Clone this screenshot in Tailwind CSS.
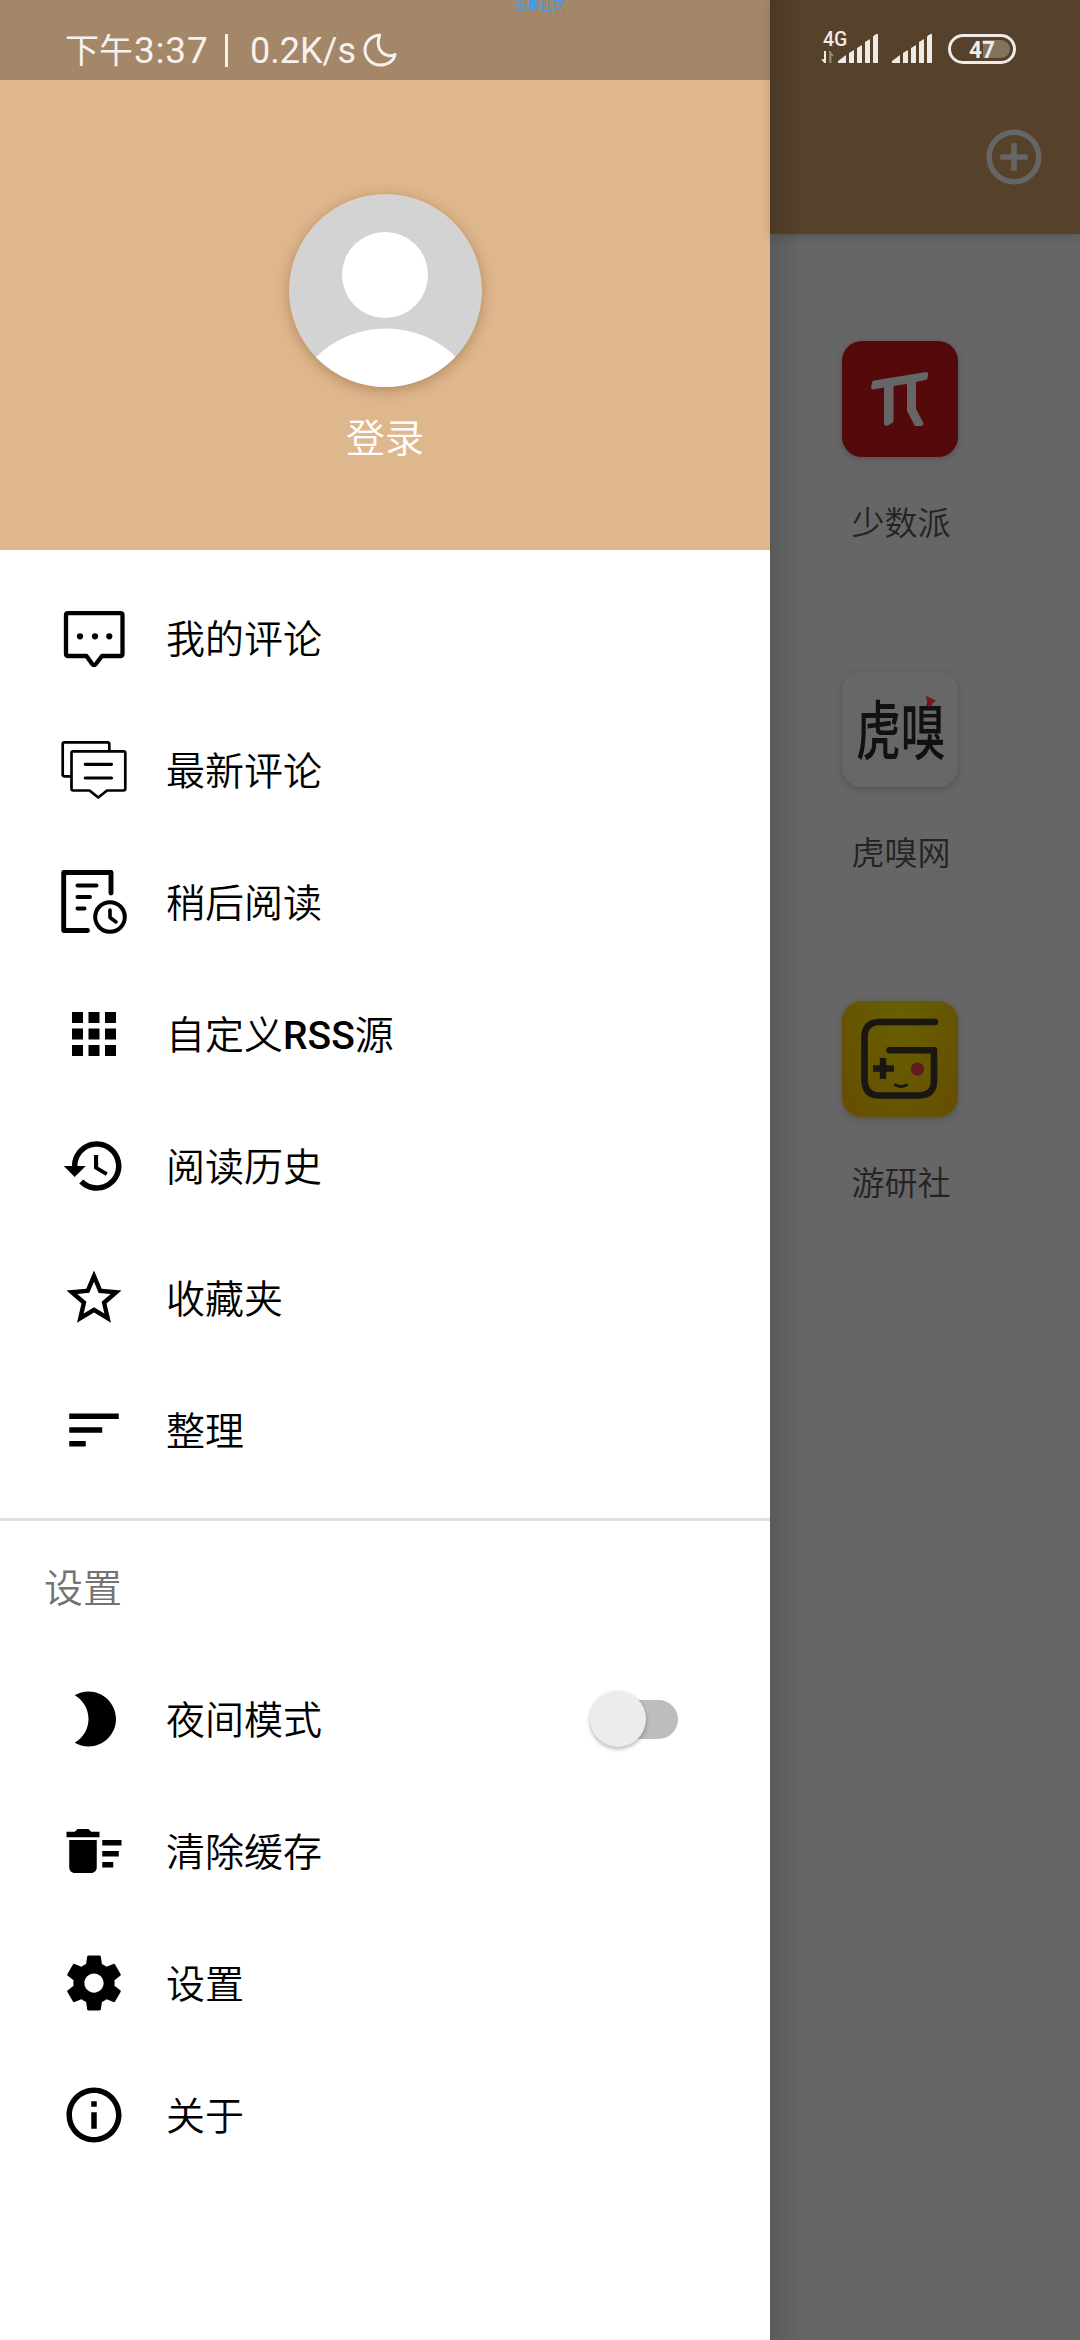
<!DOCTYPE html>
<html lang="zh-CN">
<head>
<meta charset="utf-8">
<title>RSS</title>
<script src="https://cdn.jsdelivr.net/npm/@tailwindcss/browser@4"></script>
</head>
<body class="relative flex h-[2340px] w-[1080px] overflow-hidden bg-[#666666] font-[Roboto,'Noto_Sans_CJK_SC',sans-serif] text-black">

<!-- Drawer -->
<aside class="flex h-full w-[770px] shrink-0 flex-col bg-white">
  <header class="flex h-[550px] flex-col items-center bg-[#dfb78d]">
    <div class="flex h-[80px] w-full items-center bg-[#a48769] pt-[21px] pl-[65px] text-[37px] leading-[36px] text-[#f6f1ed]">
      <span class="w-[69px] text-[34px] whitespace-nowrap">下午</span>
      <span class="w-[91px] whitespace-nowrap tracking-[0.8px]">3:37</span>
      <span class="mr-[20px] h-[33px] w-[3px] bg-[#f6f1ed]"></span>
      <span class="w-[115px] pl-[2px] text-[36px] whitespace-nowrap">0.2K/s</span>
      <svg class="mb-[20px] size-[34px] translate-y-[9px]" viewBox="0 0 34 34" fill="none" stroke="#f6f1ed" stroke-width="3" stroke-linejoin="round"><path d="M16.500 2C8 3 2 9 2 17C2 25.500 9 32 17 32C24.500 32 31 28 32 21.500C25 25.500 11 20 16.500 2Z"/></svg>
    </div>
    <svg class="mt-[114px] size-[193px] rounded-full shadow-[0_3px_14px_rgba(80,40,0,0.32)]" viewBox="0 0 193 193">
      <defs><clipPath id="av"><circle cx="96.500" cy="96.500" r="96.500"/></clipPath></defs>
      <g clip-path="url(#av)"><rect width="193" height="193" fill="#d3d3d3"/><circle cx="96" cy="81" r="43" fill="#fff"/><circle cx="97" cy="234.500" r="100" fill="#fff"/></g>
    </svg>
    <div class="mt-[26px] h-[52px] text-[39px] leading-[52px] font-[350] text-white">登录</div>
  </header>

  <nav class="flex flex-col pt-[22px] text-[39px] leading-[66px] font-[350]">
    <a class="flex h-[132px] items-center gap-[39px] pl-[61px]">
      <svg class="size-[66px]" viewBox="0 0 66 66" fill="none" stroke="#000" stroke-width="4.300" stroke-linejoin="round"><path d="M7 8.200H59.500Q61.500 8.200 61.500 10.200V49Q61.500 51 59.500 51H41L35 58.800Q33 61.200 31 58.800L25.500 51H7Q5 51 5 49V10.200Q5 8.200 7 8.200Z"/><g fill="#000" stroke="none"><circle cx="19" cy="31.300" r="3.100"/><circle cx="34" cy="31.300" r="3.100"/><circle cx="48.300" cy="31.300" r="3.100"/></g></svg>
      <span class="pt-[3px]">我的评论</span>
    </a>
    <a class="flex h-[132px] items-center gap-[39px] pl-[61px]">
      <svg class="size-[66px]" viewBox="0 0 66 66" fill="none" stroke="#000" stroke-width="2.700" stroke-linejoin="round"><path d="M10 39.300H3.500Q1.700 39.300 1.700 37.500V7Q1.700 5.300 3.500 5.300H46.500Q48.300 5.300 48.300 7V14"/><path d="M12.300 14.300H62.500Q64.300 14.300 64.300 16V51.800Q64.300 53.500 62.500 53.500H46L37.300 60.500L28.500 53.500H12.300Q10.500 53.500 10.500 51.800V16Q10.500 14.300 12.300 14.300Z"/><path stroke-linecap="round" stroke-width="3.200" d="M24.300 27.300H50.500M24.300 41H50.500"/></svg>
      <span class="pt-[3px]">最新评论</span>
    </a>
    <a class="flex h-[132px] items-center gap-[39px] pl-[61px]">
      <svg class="size-[66px]" viewBox="0 0 66 66" fill="none" stroke="#000" stroke-width="4.900" stroke-linejoin="round" stroke-linecap="round"><path d="M50 24V3.500H2.700V61.500H26.500"/><path stroke-width="4" d="M16.500 16.500H35.500M16.500 28H29M16.500 39.500H23.500"/><circle cx="49" cy="48" r="14.800" stroke-width="4"/><path stroke-width="3.600" d="M49 41V48.500L55 53"/></svg>
      <span class="pt-[3px]">稍后阅读</span>
    </a>
    <a class="flex h-[132px] items-center gap-[39px] pl-[61px]">
      <svg class="size-[66px]" viewBox="0 0 24 24"><path d="M4 8h4V4H4v4zm6 12h4v-4h-4v4zm-6 0h4v-4H4v4zm0-6h4v-4H4v4zm6 0h4v-4h-4v4zm6-10v4h4V4h-4zm-6 4h4V4h-4v4zm6 6h4v-4h-4v4zm0 6h4v-4h-4v4z"/></svg>
      <span class="pt-[3px]">自定义<b class="font-medium">RSS</b>源</span>
    </a>
    <a class="flex h-[132px] items-center gap-[39px] pl-[61px]">
      <svg class="size-[66px]" viewBox="0 0 24 24"><path d="M13 3c-4.970 0-9 4.030-9 9H1l3.890 3.890.070.140L9 12H6c0-3.870 3.130-7 7-7s7 3.130 7 7-3.130 7-7 7c-1.930 0-3.680-.790-4.940-2.060l-1.420 1.420C8.270 19.990 10.510 21 13 21c4.970 0 9-4.030 9-9s-4.030-9-9-9zm-1 5v5l4.280 2.540.720-1.210-3.500-2.080V8H12z"/></svg>
      <span class="pt-[3px]">阅读历史</span>
    </a>
    <a class="flex h-[132px] items-center gap-[39px] pl-[61px]">
      <svg class="size-[66px]" viewBox="0 0 24 24"><path d="M22 9.240l-7.190-.620L12 2 9.190 8.630 2 9.240l5.460 4.730L5.820 21 12 17.270 18.180 21l-1.630-7.030L22 9.240zM12 15.400l-3.760 2.270 1-4.280-3.320-2.880 4.380-.380L12 6.100l1.710 4.040 4.380.380-3.320 2.880 1 4.280L12 15.400z"/></svg>
      <span class="pt-[3px]">收藏夹</span>
    </a>
    <a class="flex h-[132px] items-center gap-[39px] pl-[61px]">
      <svg class="size-[66px]" viewBox="0 0 24 24"><path d="M3 18h6v-2H3v2zM3 6v2h18V6H3zm0 7h12v-2H3v2z"/></svg>
      <span class="pt-[3px]">整理</span>
    </a>

    <div class="mt-[22px] h-[3px] bg-[#e0e0e0]"></div>
    <h2 class="flex h-[132px] items-center pt-[3px] pl-[44px] text-[#737373]">设置</h2>

    <a class="flex h-[132px] items-center gap-[39px] pl-[61px]">
      <svg class="size-[66px]" viewBox="0 0 24 24"><path d="M10 2c-1.820 0-3.530.500-5 1.350C7.990 5.080 10 8.300 10 12s-2.010 6.920-5 8.650C6.470 21.500 8.180 22 10 22c5.520 0 10-4.480 10-10S15.520 2 10 2z"/></svg>
      <span class="pt-[3px]">夜间模式</span>
      <span class="mr-[92px] ml-auto flex h-[39px] w-[82px] items-center rounded-full bg-[#bdbdbd]"><i class="-ml-[6px] size-[56px] shrink-0 rounded-full bg-[#ececec] shadow-[0_2px_4px_rgba(0,0,0,0.3)]"></i></span>
    </a>
    <a class="flex h-[132px] items-center gap-[39px] pl-[61px]">
      <svg class="size-[66px]" viewBox="0 0 24 24"><path d="M15 16h4v2h-4zm0-8h7v2h-7zm0 4h6v2h-6zM3 18c0 1.100.900 2 2 2h6c1.100 0 2-.900 2-2V8H3v10zM14 5h-3l-1-1H6L5 5H2v2h12z"/></svg>
      <span class="pt-[3px]">清除缓存</span>
    </a>
    <a class="flex h-[132px] items-center gap-[39px] pl-[61px]">
      <svg class="size-[66px]" viewBox="0 0 24 24"><path d="M19.430 12.980c.040-.320.070-.640.070-.980s-.030-.660-.070-.980l2.110-1.650c.190-.150.240-.420.120-.640l-2-3.460c-.120-.220-.390-.300-.610-.220l-2.490 1c-.520-.400-1.080-.730-1.690-.980l-.380-2.650C14.460 2.180 14.250 2 14 2h-4c-.250 0-.460.180-.490.420l-.380 2.650c-.610.250-1.170.590-1.690.980l-2.490-1c-.230-.090-.490 0-.610.220l-2 3.460c-.130.220-.070.490.120.640l2.110 1.650c-.040.320-.070.650-.070.980s.030.660.070.980l-2.110 1.650c-.190.150-.240.420-.120.640l2 3.460c.120.220.390.300.610.220l2.490-1c.520.400 1.080.730 1.690.980l.380 2.650c.030.240.240.420.490.420h4c.250 0 .460-.180.490-.420l.380-2.650c.610-.250 1.170-.590 1.690-.980l2.490 1c.230.090.490 0 .610-.220l2-3.460c.120-.220.070-.490-.120-.640l-2.110-1.650zM12 15.500c-1.930 0-3.500-1.570-3.500-3.500s1.570-3.500 3.500-3.500 3.500 1.570 3.500 3.500-1.570 3.500-3.500 3.500z"/></svg>
      <span class="pt-[3px]">设置</span>
    </a>
    <a class="flex h-[132px] items-center gap-[39px] pl-[61px]">
      <svg class="size-[66px]" viewBox="0 0 24 24"><path d="M11 17h2v-6h-2v6zm1-15C6.480 2 2 6.480 2 12s4.480 10 10 10 10-4.480 10-10S17.520 2 12 2zm0 18c-4.410 0-8-3.590-8-8s3.590-8 8-8 8 3.590 8 8-3.590 8-8 8zM11 9h2V7h-2v2z"/></svg>
      <span class="pt-[3px]">关于</span>
    </a>
  </nav>
</aside>

<!-- Dimmed page behind the drawer -->
<main class="flex w-[310px] flex-col">
  <div class="flex h-[234px] flex-col bg-[#56412a] shadow-[0_3px_9px_rgba(0,0,0,0.15)]">
    <svg class="h-[80px] w-[310px]" viewBox="0 0 310 80" fill="#eeebe8">
      <text x="53" y="46" font-size="19.500" font-weight="500" font-family="Roboto">4G</text>
      <path d="M54 51h2v12h-1.800l-3-3.800h2.800z"/><path fill="#948876" d="M59.200 51h1.200l3.500 5h-2.500v7h-2.200z"/>
      <g id="sig"><path d="M68 63v-2l8-6v8zM79 63V53l5-3v13zM87 63V48l5-3v18zM95 63V42l5-3v24zM103 63V37q0-1 1-1.500L106.500 34H108v29z"/></g>
      <use href="#sig" x="54"/>
      <rect x="179.500" y="35.500" width="65" height="27" rx="13.500" fill="none" stroke="#eeebe8" stroke-width="3"/>
      <path fill="#82735f" d="M213 40h18a9 9 0 0 1 0 18h-18z"/>
      <text x="199" y="57.800" font-size="24" font-weight="700" font-family="Roboto" textLength="26" lengthAdjust="spacingAndGlyphs">47</text>
    </svg>
    <svg class="mt-[44px] mr-[33px] size-[66px] self-end" viewBox="0 0 24 24" fill="#666"><path d="M13 7h-2v4H7v2h4v4h2v-4h4v-2h-4V7zm-1-5C6.480 2 2 6.480 2 12s4.480 10 10 10 10-4.480 10-10S17.520 2 12 2zm0 18c-4.410 0-8-3.590-8-8s3.590-8 8-8 8 3.590 8 8-3.590 8-8 8z"/></svg>
  </div>

  <section class="flex w-[260px] flex-col pt-[107px] text-[33px] leading-[44px] font-[350] text-[#232323]">
    <article class="flex h-[330px] flex-col items-center">
      <svg class="size-[116px] rounded-[20px] bg-[#54090b] shadow-[0_2px_7px_rgba(0,0,0,0.2)]" viewBox="0 0 116 116" fill="#666"><path d="M32 39.500L84 31Q87 31 86 35L85 38.500L74 41V68L81.500 82Q81 85 79 85H73L65 70V43L51.500 45V81L46 84.500Q42 86 42 82.500V46.500L31.500 48.500Q29 48.500 29.200 46L30 41.500Q30.500 40 32 39.500Z"/></svg>
      <span class="mt-[45px] pl-[2px]">少数派</span>
    </article>
    <article class="flex h-[330px] flex-col items-center">
      <svg class="size-[116px] rounded-[20px] bg-[#676767] shadow-[0_2px_7px_rgba(0,0,0,0.2)]" viewBox="0 0 116 116"><g transform="translate(14 83) scale(.7 1)"><text font-size="64" font-weight="500" fill="#111" font-family="Noto Sans CJK SC">虎嗅</text></g><path d="M84 25L94 29.500L86 36.500Z" fill="#7c1414"/></svg>
      <span class="mt-[45px] pl-[2px]">虎嗅网</span>
    </article>
    <article class="flex h-[330px] flex-col items-center">
      <svg class="size-[116px] rounded-[20px] bg-radial-[at_50%_0%] from-[#666100] to-[#664d00] shadow-[0_2px_7px_rgba(0,0,0,0.2)]" viewBox="0 0 116 116" fill="none" stroke="#1a1613" stroke-width="6.600" stroke-linecap="round" stroke-linejoin="round"><path d="M93 21H36.500Q22.500 22 22.500 36V80Q23.500 94.500 37 94.500H78Q92 93.500 92 80V49.300H47.500"/><path d="M41 57V78M31 67.500H52" stroke-linecap="butt" stroke-width="6.400"/><path d="M53.500 84Q59 87 64.500 84" stroke-width="3"/><circle cx="75.500" cy="68" r="6.600" fill="#601c1c" stroke="none"/></svg>
      <span class="mt-[45px] pl-[2px]">游研社</span>
    </article>
  </section>
</main>

<!-- Drawer edge shadow, laid over the page -->
<div class="absolute top-0 left-[770px] h-full w-[32px] bg-linear-to-r from-black/12 to-transparent"></div>
<!-- Overlay label -->
<div class="absolute top-[-3px] left-[514px] text-[12.700px] leading-[18px] whitespace-nowrap text-[#3d9bf0]">流星社区</div>
</body>
</html>
